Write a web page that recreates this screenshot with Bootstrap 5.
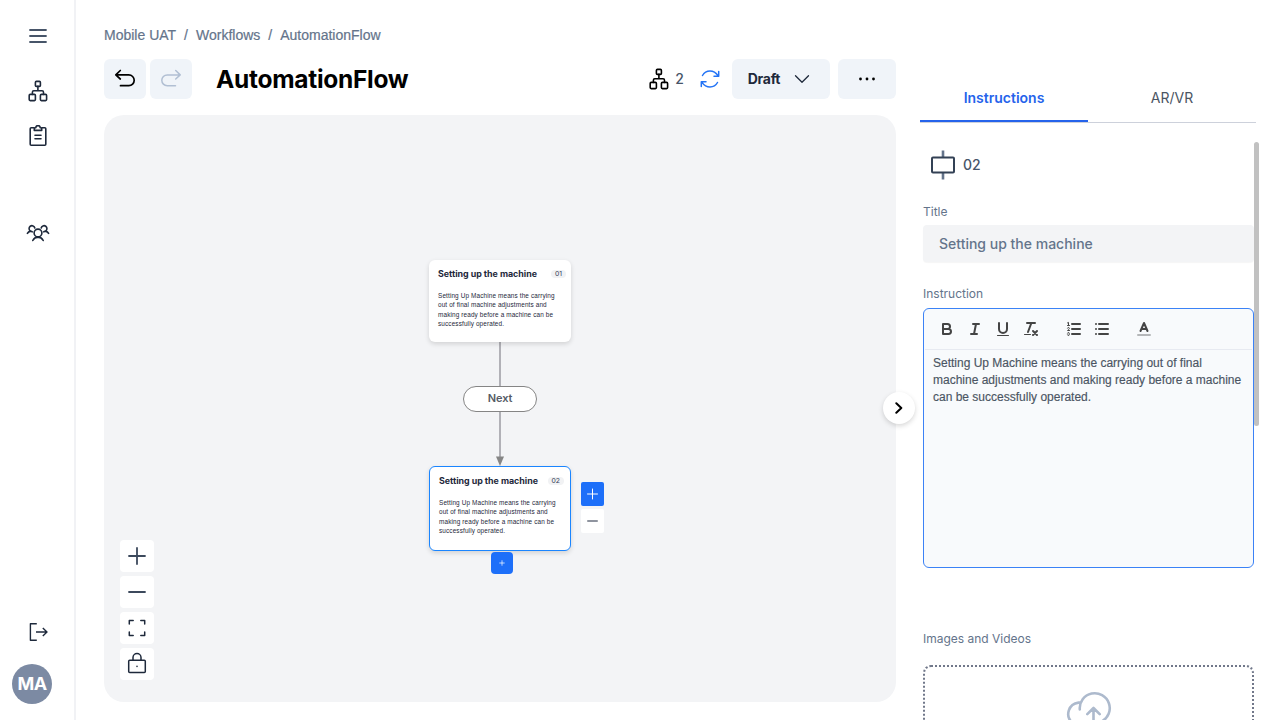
<!DOCTYPE html>
<html lang="en">
<head>
<meta charset="utf-8">
<title>AutomationFlow</title>
<meta name="viewport" content="width=device-width, initial-scale=1">
<link href="https://cdn.jsdelivr.net/npm/bootstrap@5.3.0/dist/css/bootstrap.min.css" rel="stylesheet">
<style>
  body{font-family:"Inter","Liberation Sans",sans-serif;color:#1e293b;font-size:14px;line-height:20px}
  svg{display:block;flex:none;fill:none;stroke:currentColor;stroke-linecap:round;stroke-linejoin:round}
  svg.butt{stroke-linecap:butt}
  .slate{color:#475569}
  .helv{font-family:"Liberation Sans",Arial,sans-serif}
  .rail{width:76px;border-right:2px solid #f1f2f5;flex:none;position:relative}
  .rail-link{width:32px;height:32px;margin-left:22px;color:#1e293b;display:grid;place-items:center}
  .rail-link.slate{color:#475569}
  .avatar{width:40px;height:40px;background:#7c8aa3;font-size:18px;font-weight:700;letter-spacing:-.5px;margin-left:12px}
  .work{width:792px;margin-left:28px;flex:none}
  .crumbs{color:#64748b;height:20px;margin-top:25px;font-size:14px;-webkit-text-stroke:.2px #64748b}
  .tool{height:40px;background:#f0f4f9;border-radius:6px;border:0;padding:0;color:#000;display:flex;align-items:center;justify-content:center}
  .flow-title{font-size:24.5px;font-weight:700;color:#000;line-height:40px;margin:0 0 0 24px;letter-spacing:-.28px}
  .board{height:587px;background:#f3f4f6;border-radius:20px;margin-top:16px;position:relative}
  .node{position:absolute;width:142px;background:#fff;border-radius:6px;box-shadow:0 2px 5px rgba(0,0,0,.14);padding:8px 7px 0 9px}
  .node.active{border:1px solid #1a85ff}
  .node h2{font-size:8.9px;font-weight:700;line-height:12px;margin:0;white-space:nowrap;color:#1e293b;letter-spacing:-.03px}
  .node .num{font-size:6.8px;line-height:8px;background:#f1f2f4;border-radius:5px;padding:0 4px;color:#334155}
  .node p{font-size:6.4px;line-height:9.4px;margin:11px 0 0;color:#1e293b;white-space:nowrap;letter-spacing:.13px}
  .pill{position:absolute;left:359px;top:271px;width:74px;height:25.5px;border:1px solid #858585;border-radius:13px;background:#fff;font-size:11px;font-weight:600;color:#555b66;line-height:23px;text-align:center;letter-spacing:-.15px}
  .zooms{position:absolute;left:16px;top:425px;gap:4px}
  .zooms button{width:34px;height:32px;border:0;background:#fff;border-radius:4px;padding:0;display:grid;place-items:center;color:#1e293b}
  .zooms button.slate{color:#3c495c}
  .float-btn{position:absolute;display:grid;place-items:center;border:0;padding:0;background:#1d6ff9;color:#fff}
  .toggle{position:absolute;left:779px;top:277px;width:32px;height:32px;border-radius:50%;background:#fff;box-shadow:0 2px 5px rgba(0,0,0,.16);border:0;padding:0;display:grid;place-items:center;color:#000;z-index:2}
  .side{width:340px;margin-left:24px;flex:none;position:relative}
  .side-tabs{width:336px;height:49px;margin-top:74px;border-bottom:1px solid #cdd1db}
  .side-tabs a{width:168px;height:48px;line-height:48px;text-align:center;text-decoration:none;color:#4b5563;font-size:14px}
  .side-tabs a.on{color:#2563eb;font-weight:600;border-bottom:2px solid #2563eb}
  .side-body{padding-left:3px;width:334px;height:597px;overflow:hidden}
  .lbl{font-size:12px;line-height:16px;color:#64748b}
  .title-box{height:37px;margin-top:5px;background:#f3f4f6;border-radius:4px;line-height:37px;padding-left:16px;font-weight:500;color:#64748b;box-shadow:0 1px 1px rgba(0,0,0,.04)}
  .editor{height:260px;border:1px solid #3b82f6;border-radius:6px;background:#f8fafc;margin-top:6px;color:#444}
  .editor-bar{height:41px;margin:0 1px;border-bottom:1px solid #e7eaf1;padding:0 0 0 13px}
  .editor-bar svg{margin-right:10px;stroke-width:2}
  .editor p{font-size:12px;line-height:17px;margin:5px 0 0 9px;color:#4b5563;white-space:nowrap;-webkit-text-stroke:.15px #4b5563}
  .drop{height:120px;border:2px dotted #71788a;border-radius:8px;margin-top:18px;color:#adbacd}
  .thumb{position:absolute;left:334px;top:142px;width:5px;height:284px;border-radius:3px;background:#c1c1c1}
</style>
</head>
<body class="bg-white overflow-hidden">
<svg width="0" height="0" class="position-absolute">
  <symbol id="tree" viewBox="0 0 20 22"><rect x="7.4" y="1.4" width="5" height="5" rx="1"/><rect x="1.2" y="14.4" width="6.2" height="6.2" rx="1"/><rect x="12.4" y="14.4" width="6.2" height="6.2" rx="1"/><path d="M9.9 6.4v4.4M4.4 14.4v-2.2q0-1.400 1.400-1.400h8.300q1.400 0 1.400 1.400v2.200"/></symbol>
</svg>
<div class="d-flex vh-100">
  <nav class="rail d-flex flex-column">
    <a class="rail-link slate" style="margin-top:20px" href="#"><svg width="20" height="16" stroke-width="1.800"><path d="M2 2h16M2 8h16M2 14h16"/></svg></a>
    <a class="rail-link" style="margin-top:23px" href="#"><svg width="20" height="22" stroke-width="1.600"><use href="#tree"/></svg></a>
    <a class="rail-link" style="margin-top:13px" href="#"><svg width="18" height="22" stroke-width="1.600"><path d="M5 2.700H2.200q-1 0-1 1v15.600q0 1 1 1h13.600q1 0 1-1V3.700q0-1-1-1H13M5.300 5.400h7.400V3.800q0-1-1-1h-.5a2.200 2.200 0 0 0-4.400 0h-.5q-1 0-1 1zM6 10.200h6M6 13.800h6"/></svg></a>
    <a class="rail-link" style="margin-top:65px" href="#"><svg width="24" height="18" stroke-width="1.600"><circle cx="12" cy="9" r="3.900"/><path d="M6.800 16.500q1.500-3.200 5.200-3.400 3.700.2 5.200 3.400M8.800 4A2.900 2.900 0 1 0 4.500 7.100Q2.300 7.600 1.400 9.400M5 7.200l1.200.6M15.200 4A2.900 2.900 0 1 1 19.500 7.100Q21.700 7.600 22.600 9.400M19 7.200l-1.200.6"/></svg></a>
    <a class="rail-link mt-auto" href="#"><svg class="butt" width="20" height="20" stroke-width="1.400"><path d="M8.800 1.700H2.400v16.600h6.400M8 10h11M14.800 6l4.200 4-4.200 4"/></svg></a>
    <div class="avatar rounded-circle text-white d-flex align-items-center justify-content-center" style="margin-top:16px;margin-bottom:16px">MA</div>
  </nav>

  <main class="work">
    <div class="crumbs helv d-flex"><span>Mobile UAT</span><span class="mx-2">/</span><span>Workflows</span><span class="mx-2">/</span><span>AutomationFlow</span></div>
    <header class="d-flex align-items-center" style="margin-top:14px">
      <button class="tool" style="width:42px"><svg width="22" height="20" stroke-width="1.700"><path d="M6.300 1.500 1.800 5.900l4.500 4.100M2 5.900h12.800a5.200 5.200 0 0 1 0 10.800H6.500"/></svg></button>
      <button class="tool ms-1" style="width:42px;color:#b1bfd3"><svg width="22" height="20" stroke-width="1.500"><path d="M15.700 1.500 20.200 5.900l-4.500 4.100M20 5.900H7.200a5.200 5.200 0 0 0 0 10.800h8.300"/></svg></button>
      <h1 class="flow-title">AutomationFlow</h1>
      <div class="d-flex align-items-center ms-auto">
        <svg class="text-black" width="20" height="22" stroke-width="1.600"><use href="#tree"/></svg>
        <span style="margin:0 16px 0 6px;color:#475569;font-weight:500">2</span>
        <svg width="20" height="20" stroke-width="1.500" style="margin-right:12px;color:#2474f5"><path d="M2.500 6.500Q5 2 10 2q4.800 0 8 4.700M18.700 2.500v4.700h-4.700M17.500 13.500Q15 18 10 18q-4.800 0-8-4.700M1.300 17.500v-4.700H6"/></svg>
        <button class="tool" style="width:98px;color:#1e293b;font-weight:700;letter-spacing:-.3px;padding-right:4px">Draft<svg width="16" height="10" stroke-width="1.300" style="margin-left:14px"><path d="M1.500 1.700 8 8.200l6.500-6.500"/></svg></button>
        <button class="tool ms-2" style="width:58px"><svg width="18" height="4" style="fill:#000;stroke:none"><circle cx="2.500" cy="2" r="1.400"/><circle cx="9" cy="2" r="1.400"/><circle cx="15.500" cy="2" r="1.400"/></svg></button>
      </div>
    </header>

    <section class="board">
      <svg class="position-absolute butt" style="left:390px;top:227px" width="12" height="125"><path d="M6 0v116" stroke="#b1b1b7" stroke-width="2"/><path d="M2 114.500h8L6 124z" style="fill:#858585;stroke:none"/></svg>
      <article class="node" style="left:325px;top:145px;height:82px">
        <div class="d-flex align-items-center justify-content-between"><h2>Setting up the machine</h2><span class="num" style="margin-right:-2px">01</span></div>
        <p class="helv">Setting Up Machine means the carrying<br>out of final machine adjustments and<br>making ready before a machine can be<br>successfully operated.</p>
      </article>
      <div class="pill">Next</div>
      <article class="node active" style="left:325px;top:351px;height:84.500px">
        <div class="d-flex align-items-center justify-content-between"><h2>Setting up the machine</h2><span class="num" style="margin-right:-1px">02</span></div>
        <p class="helv">Setting Up Machine means the carrying<br>out of final machine adjustments and<br>making ready before a machine can be<br>successfully operated.</p>
      </article>
      <button class="float-btn" style="left:477px;top:367px;width:23px;height:24px;border-radius:2px"><svg width="11" height="12" stroke-width="1"><path d="M5.500 1v10M.5 6h10"/></svg></button>
      <button class="float-btn" style="left:477px;top:394px;width:23px;height:24px;border-radius:2px;background:#fff;color:#6b7280"><svg width="11" height="4" stroke-width="1.600"><path d="M.8 2h9.400"/></svg></button>
      <button class="float-btn" style="left:387px;top:437px;width:22px;height:22px;border-radius:4px"><svg width="6" height="6" stroke-width=".7"><path d="M3 .7v4.600M.7 3h4.600"/></svg></button>
      <div class="zooms d-flex flex-column">
        <button class="slate"><svg width="20" height="20" stroke-width="1.800"><path d="M10 2v16M2 10h16"/></svg></button>
        <button class="slate"><svg width="20" height="20" stroke-width="1.800"><path d="M2 10h16"/></svg></button>
        <button><svg width="20" height="20" stroke-width="1.500"><path d="M2.300 6V2.500h3.900M13.800 2.500h3.900V6M17.700 14v3.500h-3.900M6.200 17.500H2.300V14"/></svg></button>
        <button><svg width="20" height="22" stroke-width="1.500" style="margin-top:-2px"><rect x="1.700" y="8.200" width="16.600" height="12.200" rx="1"/><path d="M6 8V5.500a4 4 0 0 1 8 0V8M10 14.300v.3"/></svg></button>
      </div>
      <button class="toggle"><svg width="10" height="12" stroke-width="2"><path d="M2.300 1.200 7.300 6l-5 4.800"/></svg></button>
    </section>
  </main>

  <aside class="side">
    <div class="side-tabs d-flex"><a class="on" href="#">Instructions</a><a href="#">AR/VR</a></div>
    <div class="side-body">
      <div class="d-flex align-items-center" style="margin-top:26px;height:32px;padding-left:7px;color:#334155"><svg class="butt" width="26" height="32" stroke-width="2"><path d="M13 1.500v7M13 23.500v7" stroke="#64748b" stroke-width="2.600"/><rect x="2" y="8.500" width="22" height="15" rx="1"/></svg><span style="margin-left:7px;font-weight:500;color:#475569">02</span></div>
      <div class="lbl" style="margin-top:23px">Title</div>
      <div class="title-box">Setting up the machine</div>
      <div class="lbl" style="margin-top:24px">Instruction</div>
      <div class="editor">
        <div class="editor-bar d-flex align-items-center">
          <svg width="18" height="18"><path d="M5 4h4.500a2.500 2.500 0 0 1 0 5H5zM5 9h5.500a2.500 2.500 0 0 1 0 5H5z"/></svg>
          <svg width="18" height="18"><path d="M7 4h6M5 14h6M8 14l2-10"/></svg>
          <svg width="18" height="18"><path d="M5 3v6a4 4 0 0 0 8 0V3"/><path d="M3.500 15.500h11" stroke-width="1"/></svg>
          <svg width="18" height="18"><path d="M5 3h8M6 12l3.350-9M11 11l4 4M15 11l-4 4"/><path d="M2.500 14.500h6" stroke-width="1"/></svg>
          <svg width="18" height="18" style="margin-left:15px"><path d="M7 4h8M7 9h8M7 14h8"/><path stroke-width="1" d="M2.500 5.500h2M2.500 2.900l1-.5v3M4.500 10.500h-2c0-.234 1.850-1.076 1.850-2.234A.959.959 0 0 0 2.500 8.156M2.500 14.846a.959.959 0 0 0 1.850-.109A.7.7 0 0 0 3.750 14a.688.688 0 0 0 .6-.736.959.959 0 0 0-1.850-.109"/></svg>
          <svg width="18" height="18"><path d="M6 4h9M6 9h9M6 14h9M3 4h0M3 9h0M3 14h0"/></svg>
          <svg width="18" height="18" style="margin-left:14px"><path d="M3 15h12" stroke="#b5b7b9"/><path d="M5.500 11 9 3l3.500 8M6.400 9h5.200"/></svg>
        </div>
        <p class="helv">Setting Up Machine means the carrying out of final<br>machine adjustments and making ready before a machine<br>can be successfully operated.</p>
      </div>
      <div class="lbl" style="margin-top:63px">Images and Videos</div>
      <div class="drop d-flex justify-content-center"><svg width="48" height="44" style="margin:23px 2px 0 0" stroke-width="2.600"><path d="M15.800 19.500A15 15 0 1 1 37.500 31.600M17 12.600H14.500A11.500 11.500 0 0 0 8 32.500M29.500 42V18M23.300 24.200l6.200-6.200 6.200 6.200"/></svg></div>
    </div>
    <div class="thumb"></div>
  </aside>
</div>
<script src="https://cdn.jsdelivr.net/npm/bootstrap@5.3.0/dist/js/bootstrap.bundle.min.js"></script>
</body>
</html>
